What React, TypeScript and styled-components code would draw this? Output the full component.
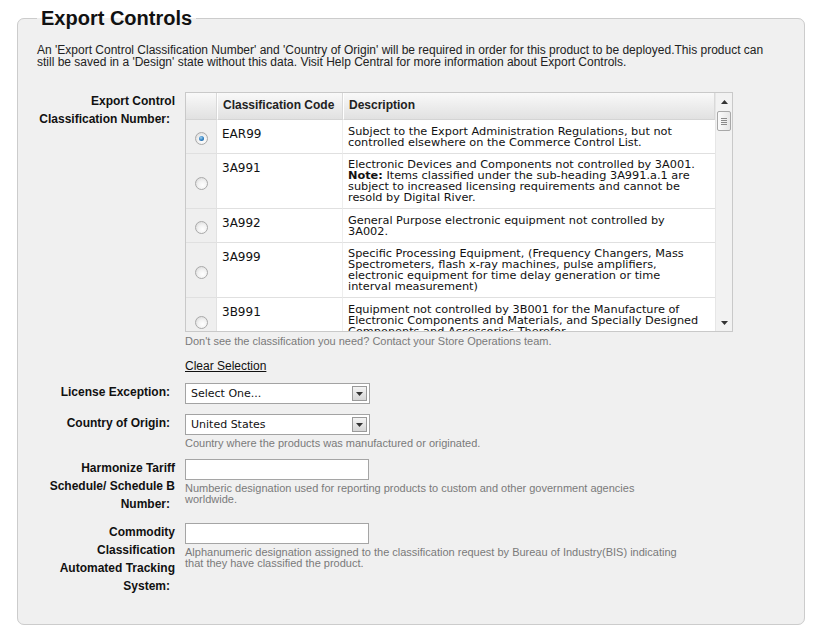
import React from 'react';
import styled, { createGlobalStyle } from 'styled-components';

const GlobalStyle = createGlobalStyle`
  html, body { margin: 0; padding: 0; background: #ffffff; }
  body { font-family: "Liberation Sans", Arial, sans-serif; color: #222; }
`;

const ARIAL = `"Liberation Sans", Arial, sans-serif`;
const VERDANA = `"DejaVu Sans", Verdana, sans-serif`;

const Page = styled.div`
  padding: 7px 17px 0;
`;

const Panel = styled.fieldset`
  margin: 0;
  padding: 14px 19px 29px;
  border: 1px solid #cccccc;
  border-radius: 7px;
  background: #f0f0f0;
  min-width: 0;
`;

const Legend = styled.legend`
  padding: 0 4px;
  font: bold 20px/23px ${ARIAL};
  color: #111;
`;

const Intro = styled.p`
  margin: 0 0 24px;
  font: 12px/12px ${ARIAL};
  color: #222;
  max-width: 742px;
`;

const FormGrid = styled.div`
  display: grid;
  grid-template-columns: 138px 1fr;
  column-gap: 10px;
  row-gap: 10px;
  align-items: start;
`;

const Label = styled.div`
  text-align: right;
  font: bold 12px/18px ${ARIAL};
  color: #111;
`;

const Colon = styled.span`
  margin-right: 5px;
`;

const Field = styled.div`
  display: flex;
  flex-direction: column;
  align-items: flex-start;
`;

const TableBox = styled.div`
  width: 548px;
  height: 240px;
  box-sizing: border-box;
  border: 1px solid #c9c9c9;
  background: #ffffff;
  display: flex;
`;

const Viewport = styled.div`
  flex: 1;
  overflow: hidden;
`;

const Grid = styled.table`
  width: 100%;
  table-layout: fixed;
  border-collapse: separate;
  border-spacing: 0;
`;

const HeadCell = styled.th<{ $first?: boolean }>`
  padding: 6px 5px 7px;
  text-align: left;
  font: bold 12px/13px ${ARIAL};
  color: #222;
  background: linear-gradient(#f9f9f9, #e1e1e1);
  border-bottom: 1px solid #d4d4d4;
  border-left: ${(p) => (p.$first ? 'none' : '1px solid #ffffff')};
  border-right: 1px solid #d9d9d9;
`;

const RadioCell = styled.td`
  width: 31px;
  padding: 3px 0 0 1px;
  background: #efefef;
  border-bottom: 1px solid #e0e0e0;
  border-right: 1px solid #e2e2e2;
  vertical-align: middle;
  text-align: center;
`;

const CodeCell = styled.td`
  padding: 6px 5px 5px;
  font: 12px/17px ${VERDANA};
  color: #111;
  vertical-align: top;
  border-bottom: 1px solid #e0e0e0;
  border-right: 1px solid #eeeeee;
`;

const DescCell = styled.td`
  padding: 5.5px 16px 5px 5px;
  font: 11.3px/11px ${VERDANA};
  color: #111;
  vertical-align: top;
  border-bottom: 1px solid #e0e0e0;
`;

const Radio = styled.span<{ $checked?: boolean }>`
  display: inline-block;
  width: 13px;
  height: 13px;
  box-sizing: border-box;
  border-radius: 50%;
  border: 1px solid #a9a9a9;
  background: radial-gradient(circle at 60% 65%, #ffffff 0%, #f2f2f2 45%, #d2d2d2 100%);
  position: relative;
  vertical-align: middle;
  &::after {
    content: '';
    display: ${(p) => (p.$checked ? 'block' : 'none')};
    position: absolute;
    left: 3px;
    top: 3px;
    width: 5px;
    height: 5px;
    border-radius: 50%;
    background: radial-gradient(circle at 40% 35%, #9fd0f0 0%, #2f7fc0 55%, #1a4f86 100%);
  }
`;

const ScrollTrack = styled.div`
  width: 17px;
  background: #f2f2f2;
  border-left: 1px solid #e6e6e6;
  box-sizing: border-box;
  display: flex;
  flex-direction: column;
  align-items: center;
`;

const ScrollArrow = styled.div`
  height: 17px;
  width: 100%;
  display: flex;
  align-items: center;
  justify-content: center;
`;

const Thumb = styled.div`
  width: 14px;
  height: 20px;
  margin-top: 1px;
  box-sizing: border-box;
  border: 1px solid #a8a8a8;
  border-radius: 2px;
  background: linear-gradient(90deg, #fbfbfb, #e6e6e6);
  display: flex;
  align-items: center;
  justify-content: center;
`;

const Spacer = styled.div`
  flex: 1;
`;

const Hint = styled.div<{ $gap?: number }>`
  margin-top: ${(p) => p.$gap ?? 3}px;
  font: 11px/11px ${ARIAL};
  color: #7a7a7a;
  max-width: 496px;
`;

const ClearLink = styled.a`
  margin-top: 12px;
  font: 12px/14px ${ARIAL};
  color: #111;
  text-decoration: underline;
  cursor: pointer;
`;

const Select = styled.div`
  width: 185px;
  height: 21px;
  box-sizing: border-box;
  border: 1px solid #a3a3a3;
  background: #ffffff;
  display: flex;
  align-items: center;
`;

const SelectText = styled.span`
  flex: 1;
  padding-left: 5px;
  font: 11px/13px ${VERDANA};
  color: #111;
`;

const SelectButton = styled.span`
  width: 15px;
  height: 15px;
  margin-right: 2px;
  box-sizing: border-box;
  border: 1px solid #9a9a9a;
  background: linear-gradient(#f4f4f4, #d6d6d6);
  display: flex;
  align-items: center;
  justify-content: center;
`;

const TextInput = styled.input`
  width: 184px;
  height: 21px;
  box-sizing: border-box;
  border: 1px solid #a5a5a5;
  background: #ffffff;
  padding: 0 4px;
  margin: 0;
  font: 11px ${VERDANA};
`;

const Triangle = ({ up }: { up?: boolean }) => (
  <svg width="7" height="4" viewBox="0 0 7 4">
    <path d={up ? 'M0 4 L3.5 0 L7 4 Z' : 'M0 0 L7 0 L3.5 4 Z'} fill="#333" />
  </svg>
);

const Grip = () => (
  <svg width="6" height="7" viewBox="0 0 6 7">
    <path d="M0 0.5 H6 M0 2.5 H6 M0 4.5 H6 M0 6.5 H6" stroke="#8a8a8a" strokeWidth="1" />
  </svg>
);

type Row = { code: string; desc: React.ReactNode; checked?: boolean };

const rows: Row[] = [
  {
    code: 'EAR99',
    checked: true,
    desc: 'Subject to the Export Administration Regulations, but not controlled elsewhere on the Commerce Control List.',
  },
  {
    code: '3A991',
    desc: (
      <>
        Electronic Devices and Components not controlled by 3A001.
        <br />
        <b>Note:</b> Items classified under the sub-heading 3A991.a.1 are subject to increased licensing
        requirements and cannot be resold by Digital River.
      </>
    ),
  },
  { code: '3A992', desc: 'General Purpose electronic equipment not controlled by 3A002.' },
  {
    code: '3A999',
    desc: 'Specific Processing Equipment, (Frequency Changers, Mass Spectrometers, flash x-ray machines, pulse amplifiers, electronic equipment for time delay generation or time interval measurement)',
  },
  {
    code: '3B991',
    desc: 'Equipment not controlled by 3B001 for the Manufacture of Electronic Components and Materials, and Specially Designed Components and Accessories Therefor.',
  },
];

const Dropdown = ({ value }: { value: string }) => (
  <Select>
    <SelectText>{value}</SelectText>
    <SelectButton>
      <Triangle />
    </SelectButton>
  </Select>
);

export default function App() {
  return (
    <Page>
      <GlobalStyle />
      <Panel>
        <Legend>Export Controls</Legend>
        <Intro>
          An 'Export Control Classification Number' and 'Country of Origin' will be required in order for this
          product to be deployed.This product can still be saved in a 'Design' state without this data. Visit
          Help Central for more information about Export Controls.
        </Intro>
        <FormGrid>
          <Label>
            Export Control Classification Number:<Colon />
          </Label>
          <Field>
            <TableBox>
              <Viewport>
                <Grid>
                  <colgroup>
                    <col style={{ width: 31 }} />
                    <col style={{ width: 126 }} />
                    <col />
                  </colgroup>
                  <thead>
                    <tr>
                      <HeadCell $first />
                      <HeadCell>Classification Code</HeadCell>
                      <HeadCell>Description</HeadCell>
                    </tr>
                  </thead>
                  <tbody>
                    {rows.map((r) => (
                      <tr key={r.code}>
                        <RadioCell>
                          <Radio $checked={r.checked} />
                        </RadioCell>
                        <CodeCell>{r.code}</CodeCell>
                        <DescCell>{r.desc}</DescCell>
                      </tr>
                    ))}
                  </tbody>
                </Grid>
              </Viewport>
              <ScrollTrack>
                <ScrollArrow>
                  <Triangle up />
                </ScrollArrow>
                <Thumb>
                  <Grip />
                </Thumb>
                <Spacer />
                <ScrollArrow>
                  <Triangle />
                </ScrollArrow>
              </ScrollTrack>
            </TableBox>
            <Hint $gap={4}>Don't see the classification you need? Contact your Store Operations team.</Hint>
            <ClearLink>Clear Selection</ClearLink>
          </Field>

          <Label>
            License Exception:<Colon />
          </Label>
          <Field>
            <Dropdown value="Select One..." />
          </Field>

          <Label>
            Country of Origin:<Colon />
          </Label>
          <Field>
            <Dropdown value="United States" />
            <Hint>Country where the products was manufactured or originated.</Hint>
          </Field>

          <Label>
            Harmonize Tariff Schedule/ Schedule B Number:<Colon />
          </Label>
          <Field>
            <TextInput type="text" />
            <Hint>
              Numberic designation used for reporting products to custom and other government agencies worldwide.
            </Hint>
          </Field>

          <Label>
            Commodity Classification Automated Tracking System:<Colon />
          </Label>
          <Field>
            <TextInput type="text" />
            <Hint>
              Alphanumeric designation assigned to the classification request by Bureau of Industry(BIS) indicating
              that they have classified the product.
            </Hint>
          </Field>
        </FormGrid>
      </Panel>
    </Page>
  );
}
